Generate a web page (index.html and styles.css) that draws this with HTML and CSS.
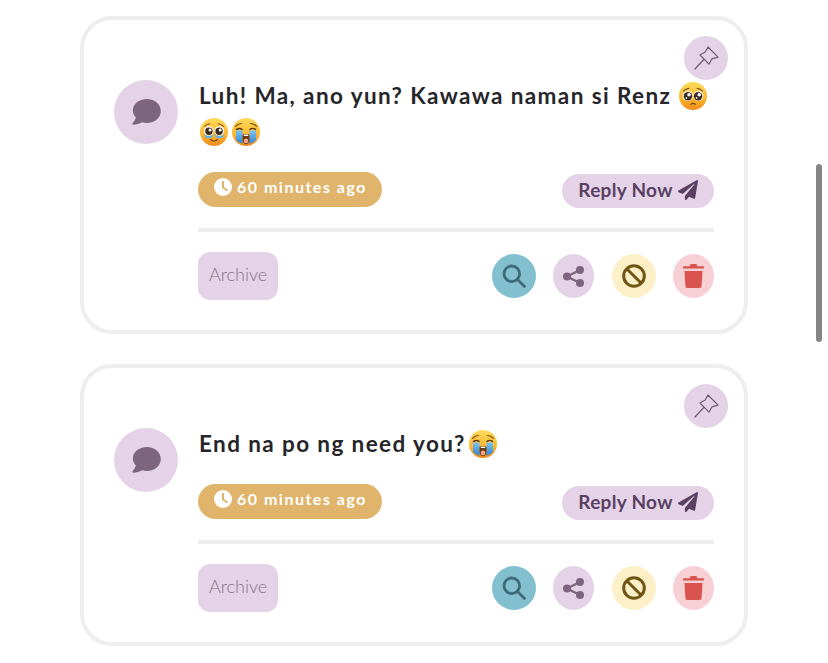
FILE: index.html
```html
<!DOCTYPE html>
<html lang="en">
<head>
    <meta charset="UTF-8">
    <meta name="viewport" content="width=device-width, initial-scale=1.0">
    <title>Notifications</title>
    <link rel="stylesheet" href="styles.css">
</head>
<body>
    <svg class="icon-defs" width="0" height="0" aria-hidden="true">
        <defs>
            <linearGradient id="face" x1="0" y1="0" x2="0" y2="1">
                <stop offset="0" stop-color="#fddc5c"/>
                <stop offset="0.6" stop-color="#fbb62e"/>
                <stop offset="1" stop-color="#f08a1d"/>
            </linearGradient>
            <linearGradient id="tear" x1="0" y1="0" x2="0" y2="1">
                <stop offset="0" stop-color="#7cc4f0"/>
                <stop offset="1" stop-color="#2f86d6"/>
            </linearGradient>
            <symbol id="i-comment" viewBox="0 0 28 25">
                <path d="M14.5 0C6.8 0 .8 4.8.8 11c0 2.6 1.1 5 2.9 6.900-.6 2.300-2.100 4.300-3.100 5.400-.4.500-.2 1.300 1 1.400 3.100.2 6.300-1 8.400-2.200 1.400.4 2.900.5 4.500.5 7.400 0 13.300-5 13.300-11.500S21.900 0 14.500 0z"/>
            </symbol>
            <symbol id="i-clock" viewBox="0 0 18 18">
                <circle cx="9" cy="9" r="9" fill="#fff"/>
                <path d="M9 3.800V9.500l3.800 2.600" fill="none" stroke="#e1b46c" stroke-width="2" stroke-linecap="round" stroke-linejoin="round"/>
            </symbol>
            <symbol id="i-plane" viewBox="0 0 512 512">
                <path d="M476 3.200L12.500 270.600c-18.100 10.400-15.800 35.600 2.200 43.200L121 358.400l287.300-253.200c5.500-4.900 13.300 2.600 8.600 8.300L176 407v80.500c0 23.600 28.500 32.900 42.500 15.800L282 426l124.600 52.200c14.200 6 30.400-2.900 33-18.200l72-432C515 7.800 493.300-6.800 476 3.200z"/>
            </symbol>
            <symbol id="i-pin" viewBox="0 0 44 44">
                <path d="M24 11l10 10.200-6 1.600-3 5.400-9-9.200 5.200-3z" fill="none" stroke="#6f5a75" stroke-width="1.200" stroke-linejoin="round"/>
                <path d="M19.800 23.500L11 33" fill="none" stroke="#6f5a75" stroke-width="1.200" stroke-linecap="round"/>
            </symbol>
            <symbol id="i-search" viewBox="0 0 24 24">
                <circle cx="9.800" cy="9.800" r="7.800" fill="none" stroke="#3e6a78" stroke-width="2.800"/>
                <path d="M15.500 15.500L22.500 22.500" fill="none" stroke="#3e6a78" stroke-width="2.800" stroke-linecap="round"/>
            </symbol>
            <symbol id="i-share" viewBox="0 0 21 21">
                <g fill="#7d6580">
                    <circle cx="4" cy="10.500" r="4"/>
                    <circle cx="17" cy="4" r="4"/>
                    <circle cx="17" cy="17" r="4"/>
                </g>
                <path d="M17 4L4 10.500L17 17" fill="none" stroke="#7d6580" stroke-width="2.400"/>
            </symbol>
            <symbol id="i-ban" viewBox="0 0 24 24">
                <circle cx="12" cy="12" r="10.300" fill="none" stroke="#6f5513" stroke-width="3"/>
                <path d="M5 5L19 19" fill="none" stroke="#6f5513" stroke-width="3"/>
            </symbol>
            <symbol id="i-trash" viewBox="0 0 21 24">
                <path d="M0 3.300c0-.6.500-1 1-1h5.500L7.300.600C7.500.200 7.900 0 8.300 0h4.400c.4 0 .8.200 1 .600l.8 1.700H20c.5 0 1 .4 1 1v1.200H0z" fill="#d9534f"/>
                <path d="M1.500 7h18l-.9 15c-.1 1.100-1 2-2.100 2H4.500c-1.100 0-2-.9-2.100-2z" fill="#d9534f"/>
            </symbol>
            <symbol id="e-pleading" viewBox="0 0 28 28">
                <circle cx="14" cy="14" r="14" fill="url(#face)"/>
                <path d="M4.500 9.200C6 7.500 7.800 6.600 9.800 6.400M23.500 9.200C22 7.500 20.200 6.600 18.200 6.400" fill="none" stroke="#7a4a12" stroke-width="1.100" stroke-linecap="round"/>
                <circle cx="8.700" cy="14" r="5" fill="#fff"/>
                <circle cx="19.300" cy="14" r="5" fill="#fff"/>
                <circle cx="8.900" cy="14.300" r="4.200" fill="#3b2a20"/>
                <circle cx="19.100" cy="14.300" r="4.200" fill="#3b2a20"/>
                <circle cx="10" cy="12.800" r="1.800" fill="#fff"/>
                <circle cx="20.200" cy="12.800" r="1.800" fill="#fff"/>
                <circle cx="7.400" cy="16" r="0.900" fill="#cfe6f5"/>
                <circle cx="17.600" cy="16" r="0.900" fill="#cfe6f5"/>
                <path d="M11.800 22.300c1.300-1 3.100-1 4.400 0" fill="none" stroke="#7a4a12" stroke-width="1.200" stroke-linecap="round"/>
            </symbol>
            <symbol id="e-holding" viewBox="0 0 28 28">
                <circle cx="14" cy="14" r="14" fill="url(#face)"/>
                <path d="M4.500 8.500C6 6.800 7.800 5.900 9.800 5.700M23.500 8.500C22 6.800 20.200 5.900 18.200 5.700" fill="none" stroke="#7a4a12" stroke-width="1.100" stroke-linecap="round"/>
                <circle cx="8.700" cy="13" r="4.800" fill="#fff"/>
                <circle cx="19.300" cy="13" r="4.800" fill="#fff"/>
                <circle cx="8.900" cy="13.200" r="3.700" fill="#3b2a20"/>
                <circle cx="19.100" cy="13.200" r="3.700" fill="#3b2a20"/>
                <circle cx="10" cy="12" r="1.500" fill="#fff"/>
                <circle cx="20.200" cy="12" r="1.500" fill="#fff"/>
                <path d="M3.800 16.500c1.500 1.800 8 1.800 9.700 0-.3 2.300-2.300 3.800-4.900 3.800s-4.500-1.500-4.800-3.800zM14.500 16.500c1.700 1.800 8.200 1.800 9.700 0-.3 2.300-2.200 3.800-4.800 3.800s-4.600-1.500-4.900-3.800z" fill="#5fb5ea"/>
                <path d="M10.500 21.500c2 1.800 5 1.800 7 0" fill="none" stroke="#7a4a12" stroke-width="1.200" stroke-linecap="round"/>
            </symbol>
            <symbol id="e-sob" viewBox="0 0 28 28">
                <circle cx="14" cy="14" r="14" fill="url(#face)"/>
                <path d="M3.500 8.300C5 6.500 7.200 5.500 9.500 5.500M24.500 8.300C23 6.500 20.800 5.500 18.500 5.500" fill="none" stroke="#7a4a12" stroke-width="1.200" stroke-linecap="round"/>
                <path d="M4.500 11.500c1.500-1.500 4-1.500 5.500 0M18 11.500c1.500-1.500 4-1.500 5.500 0" fill="none" stroke="#5b3410" stroke-width="1.500" stroke-linecap="round"/>
                <path d="M4 12.500h6.500v13.300C8.100 25 5.700 23.700 4 22zM17.500 12.500H24V22c-1.700 1.700-4.100 3-6.500 3.800z" fill="url(#tear)"/>
                <path d="M10.500 17c1-1.400 6-1.400 7 0v5.500c-.6 2.500-1.900 3.700-3.500 3.700s-2.900-1.200-3.500-3.700z" fill="#6b3a12"/>
                <path d="M11.500 17c1-.6 4-.6 5 0l-.5 1h-4z" fill="#fff"/>
                <ellipse cx="14" cy="23" rx="2.300" ry="2.400" fill="#f6a58a"/>
            </symbol>
        </defs>
    </svg>

    <main class="feed">
        <article class="card">
            <button class="pin"><svg class="pin-icon"><use href="#i-pin"/></svg></button>
            <div class="avatar"><svg class="avatar-icon"><use href="#i-comment"/></svg></div>
            <div class="card-body">
                <p class="message">Luh! Ma, ano yun? Kawawa naman si Renz <svg class="emoji emoji-spaced"><use href="#e-pleading"/></svg><svg class="emoji emoji-gap"><use href="#e-holding"/></svg><svg class="emoji"><use href="#e-sob"/></svg></p>
                <div class="meta">
                    <span class="time"><svg class="time-icon"><use href="#i-clock"/></svg>60 minutes ago</span>
                    <a class="reply" href="#">Reply Now <svg class="reply-icon"><use href="#i-plane"/></svg></a>
                </div>
                <div class="actions">
                    <button class="archive">Archive</button>
                    <div class="tools">
                        <button class="tool tool-search"><svg class="tool-icon"><use href="#i-search"/></svg></button>
                        <button class="tool tool-share"><svg class="share-icon"><use href="#i-share"/></svg></button>
                        <button class="tool tool-ban"><svg class="tool-icon"><use href="#i-ban"/></svg></button>
                        <button class="tool tool-trash"><svg class="trash-icon"><use href="#i-trash"/></svg></button>
                    </div>
                </div>
            </div>
        </article>

        <article class="card">
            <button class="pin"><svg class="pin-icon"><use href="#i-pin"/></svg></button>
            <div class="avatar"><svg class="avatar-icon"><use href="#i-comment"/></svg></div>
            <div class="card-body">
                <p class="message">End na po ng need you?<svg class="emoji emoji-end"><use href="#e-sob"/></svg></p>
                <div class="meta">
                    <span class="time"><svg class="time-icon"><use href="#i-clock"/></svg>60 minutes ago</span>
                    <a class="reply" href="#">Reply Now <svg class="reply-icon"><use href="#i-plane"/></svg></a>
                </div>
                <div class="actions">
                    <button class="archive">Archive</button>
                    <div class="tools">
                        <button class="tool tool-search"><svg class="tool-icon"><use href="#i-search"/></svg></button>
                        <button class="tool tool-share"><svg class="share-icon"><use href="#i-share"/></svg></button>
                        <button class="tool tool-ban"><svg class="tool-icon"><use href="#i-ban"/></svg></button>
                        <button class="tool tool-trash"><svg class="trash-icon"><use href="#i-trash"/></svg></button>
                    </div>
                </div>
            </div>
        </article>
    </main>

    <div class="scroll-thumb"></div>
</body>
</html>
```

FILE: styles.css
```css
:root {
    --lilac: #e4d3e6;
    --lilac-icon: #7d6580;
    --plum: #5a3f64;
    --gold: #e1b46c;
    --line: #eeeeee;
    --text-color: #26262a;
}

* {
    margin: 0;
    padding: 0;
    box-sizing: border-box;
}

html, body {
    height: 100%;
    overflow: hidden;
}

body {
    font-family: 'Lato', 'Liberation Sans', sans-serif;
    color: var(--text-color);
    background-color: #fff;
}

button {
    border: 0;
    font-family: inherit;
}

.icon-defs {
    position: absolute;
}

.feed {
    display: flex;
    flex-direction: column;
    gap: 30px;
    width: 668px;
    margin: 16px 0 0 80px;
}

.card {
    position: relative;
    display: flex;
    gap: 20px;
    padding: 60px 30px 30px;
    border: 4px solid var(--line);
    border-radius: 32px;
    background-color: #fff;
}

.pin {
    position: absolute;
    top: 16px;
    right: 16px;
    width: 44px;
    height: 44px;
    border-radius: 50%;
    background-color: var(--lilac);
}

.pin-icon {
    display: block;
    width: 44px;
    height: 44px;
}

.avatar {
    display: flex;
    flex-shrink: 0;
    justify-content: center;
    align-items: center;
    width: 64px;
    height: 64px;
    border-radius: 50%;
    background-color: var(--lilac);
}

.avatar-icon {
    width: 29px;
    height: 26px;
    fill: var(--lilac-icon);
}

.card-body {
    flex: 1;
}

.message {
    margin-top: -2px;
    padding-left: 1px;
    font-size: 22.5px;
    font-weight: 700;
    line-height: 36px;
    letter-spacing: 1.4px;
}

.emoji {
    width: 28px;
    height: 28px;
    vertical-align: -6px;
}

.emoji-spaced {
    margin-left: 1px;
}

.emoji-gap {
    margin: 0 4px 0 1px;
}

.emoji-end {
    margin-left: 3px;
}

.meta {
    display: flex;
    justify-content: space-between;
    height: 36px;
    margin-top: 22px;
}

.time {
    display: flex;
    align-items: center;
    gap: 5px;
    align-self: flex-start;
    width: 184px;
    height: 35px;
    padding: 0 16px 6px;
    border-radius: 18px;
    background-color: var(--gold);
    color: #fff;
    font-size: 16px;
    font-weight: 700;
    letter-spacing: 1.5px;
    white-space: nowrap;
}

.time-icon {
    flex-shrink: 0;
    width: 18px;
    height: 18px;
}

.reply {
    display: flex;
    align-items: center;
    justify-content: center;
    gap: 5px;
    align-self: flex-end;
    width: 152px;
    height: 34px;
    padding-bottom: 3px;
    border-radius: 17px;
    background-color: var(--lilac);
    color: var(--plum);
    font-size: 19px;
    font-weight: 700;
    letter-spacing: 0.3px;
    text-decoration: none;
    white-space: nowrap;
}

.reply-icon {
    width: 20px;
    height: 20px;
    fill: var(--plum);
}

.actions {
    display: flex;
    justify-content: space-between;
    align-items: center;
    margin-top: 20px;
    padding-top: 20px;
    border-top: 4px solid var(--line);
}

.archive {
    width: 80px;
    height: 48px;
    padding-bottom: 4px;
    border-radius: 12px;
    background-color: var(--lilac);
    color: #8a7290;
    font-size: 18px;
    font-weight: 300;
}

.tools {
    display: flex;
    justify-content: space-between;
    width: 222px;
}

.tool {
    display: flex;
    justify-content: center;
    align-items: center;
    width: 44px;
    height: 44px;
    border-radius: 50%;
}

.tool-search { background-color: #83c0cf; }
.tool-share { width: 41px; background-color: var(--lilac); }
.tool-ban { background-color: #fdf0c8; }
.tool-trash { width: 41px; background-color: #f6d0d5; }

.tool-icon {
    width: 24px;
    height: 24px;
}

.share-icon {
    width: 21px;
    height: 21px;
}

.trash-icon {
    width: 21px;
    height: 24px;
}

.scroll-thumb {
    position: absolute;
    top: 164px;
    left: 816px;
    width: 6px;
    height: 178px;
    border-radius: 3px;
    background-color: #868686;
}
```
